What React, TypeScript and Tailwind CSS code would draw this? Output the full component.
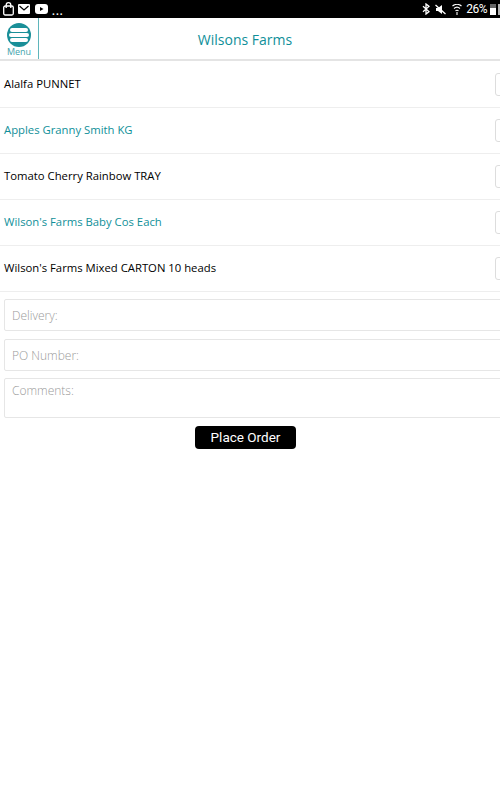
const products = [
    { name: 'Alalfa PUNNET', highlight: false },
    { name: 'Apples Granny Smith KG', highlight: true },
    { name: 'Tomato Cherry Rainbow TRAY', highlight: false },
    { name: "Wilson's Farms Baby Cos Each", highlight: true },
    { name: "Wilson's Farms Mixed CARTON 10 heads", highlight: false },
];

function StatusBar() {
    return (
        <div className="flex h-[18px] items-center justify-between bg-black pl-[3px] text-white">
            <div className="flex items-center gap-[4px]">
                <svg width="11" height="14" viewBox="0 0 11 14" fill="none" stroke="white" strokeWidth="1.3">
                    <rect x="0.7" y="4" width="9.6" height="9" rx="1.5" />
                    <path d="M3.2 6V3a2.3 2.3 0 0 1 4.6 0v3" />
                </svg>
                <svg width="12" height="10" viewBox="0 0 12 10">
                    <rect width="12" height="10" rx="1" fill="white" />
                    <path d="M1.5 2l4.5 4 4.5-4" fill="none" stroke="black" strokeWidth="1.2" />
                </svg>
                <svg className="ml-[1px]" width="13" height="10" viewBox="0 0 13 10">
                    <rect width="13" height="10" rx="3" fill="white" />
                    <path d="M5 3l3.5 2L5 7z" fill="black" />
                </svg>
                <span className="mt-[5px] font-['Roboto',sans-serif] text-[10px] font-bold leading-none tracking-[1px]">...</span>
            </div>
            <div className="flex items-center">
                <svg width="8" height="12" viewBox="0 0 8 12" fill="none" stroke="white" strokeWidth="1.3">
                    <path d="M1 3.2l6 5.4L4 11V1l3 2.4L1 8.8" />
                </svg>
                <svg className="ml-[5px]" width="11" height="11" viewBox="0 0 11 11">
                    <path d="M1 4h2l4-3v9L3 7H1z" fill="white" />
                    <path d="M0.5 1l10 9" stroke="white" strokeWidth="1.3" />
                </svg>
                <svg className="ml-[6px]" width="10" height="11" viewBox="0 0 10 11" fill="none" stroke="white" strokeWidth="1.1">
                    <path d="M0.5 2a7 7 0 0 1 9 0M2 4.5a4.5 4.5 0 0 1 6 0M3.5 7a2 2 0 0 1 3 0" />
                    <path d="M5 8v3" />
                </svg>
                <span className="ml-[4px] font-['Roboto',sans-serif] text-[12px] leading-none tracking-[-0.5px]">26%</span>
                <div className="ml-[3px] flex h-[11px] w-[6px] items-end bg-white/40">
                    <div className="h-[7px] w-full bg-white" />
                </div>
                <div className="ml-[2px] h-[11px] w-[2px] bg-white/70" />
            </div>
        </div>
    );
}

function Header() {
    return (
        <div className="flex h-[43px] border-b-2 border-[#e4e4e4]">
            <div className="flex w-[39px] shrink-0 flex-col items-center border-r border-[#5fb5bb]">
                <svg className="mt-[5px]" width="24" height="24" viewBox="0 0 24 24">
                    <circle cx="12" cy="12" r="12" fill="#1a8f98" />
                    <rect x="3" y="5" width="18" height="4" rx="2" fill="white" />
                    <rect x="2" y="10" width="20" height="4" rx="2" fill="white" />
                    <rect x="3" y="15" width="18" height="4" rx="2" fill="white" />
                </svg>
                <span className="text-[9px] leading-[9px] text-[#3fa3ab]">Menu</span>
            </div>
            <div className="flex-1 pt-[12px] pr-[49px] text-center text-[14px] leading-[20px] text-[#0f8f99]">Wilsons Farms</div>
        </div>
    );
}

function ProductRow({ name, highlight }: { name: string; highlight: boolean }) {
    return (
        <div className="flex h-[46px] items-center justify-between border-b border-[#eeeeee] pl-1">
            <span className={`pb-[1px] text-[11.3px] font-medium ${highlight ? 'text-[#0f8f99]' : 'text-black'}`}>{name}</span>
            <div className="-mr-2 h-[23px] w-[13px] rounded-[3px] border border-[#dddddd]" />
        </div>
    );
}

function Field({ label, className }: { label: string; className: string }) {
    return (
        <div className={`-mr-4 ml-1 rounded-[2px] border border-[#e6e6e6] px-[7px] text-[12px] font-light text-[#9a9a9a] ${className}`}>
            {label}
        </div>
    );
}

export default function App() {
    return (
        <div className="h-[800px] w-[500px] overflow-hidden bg-white font-['Open_Sans',sans-serif]">
            <StatusBar />
            <Header />
            <div className="pt-px">
                {products.map((p) => (
                    <ProductRow key={p.name} name={p.name} highlight={p.highlight} />
                ))}
            </div>
            <div className="mt-[7px] flex flex-col">
                <Field label="Delivery:" className="h-[32px] leading-[31px]" />
                <Field label="PO Number:" className="mt-[8px] h-[32px] leading-[31px]" />
                <Field label="Comments:" className="mt-[7px] h-[40px] leading-[23px]" />
            </div>
            <div className="mt-[8px] flex justify-center pr-[9px]">
                <button className="h-[23px] w-[101px] rounded-[4px] bg-black font-['Roboto',sans-serif] text-[13.5px] leading-none text-white">
                    Place Order
                </button>
            </div>
        </div>
    );
}
